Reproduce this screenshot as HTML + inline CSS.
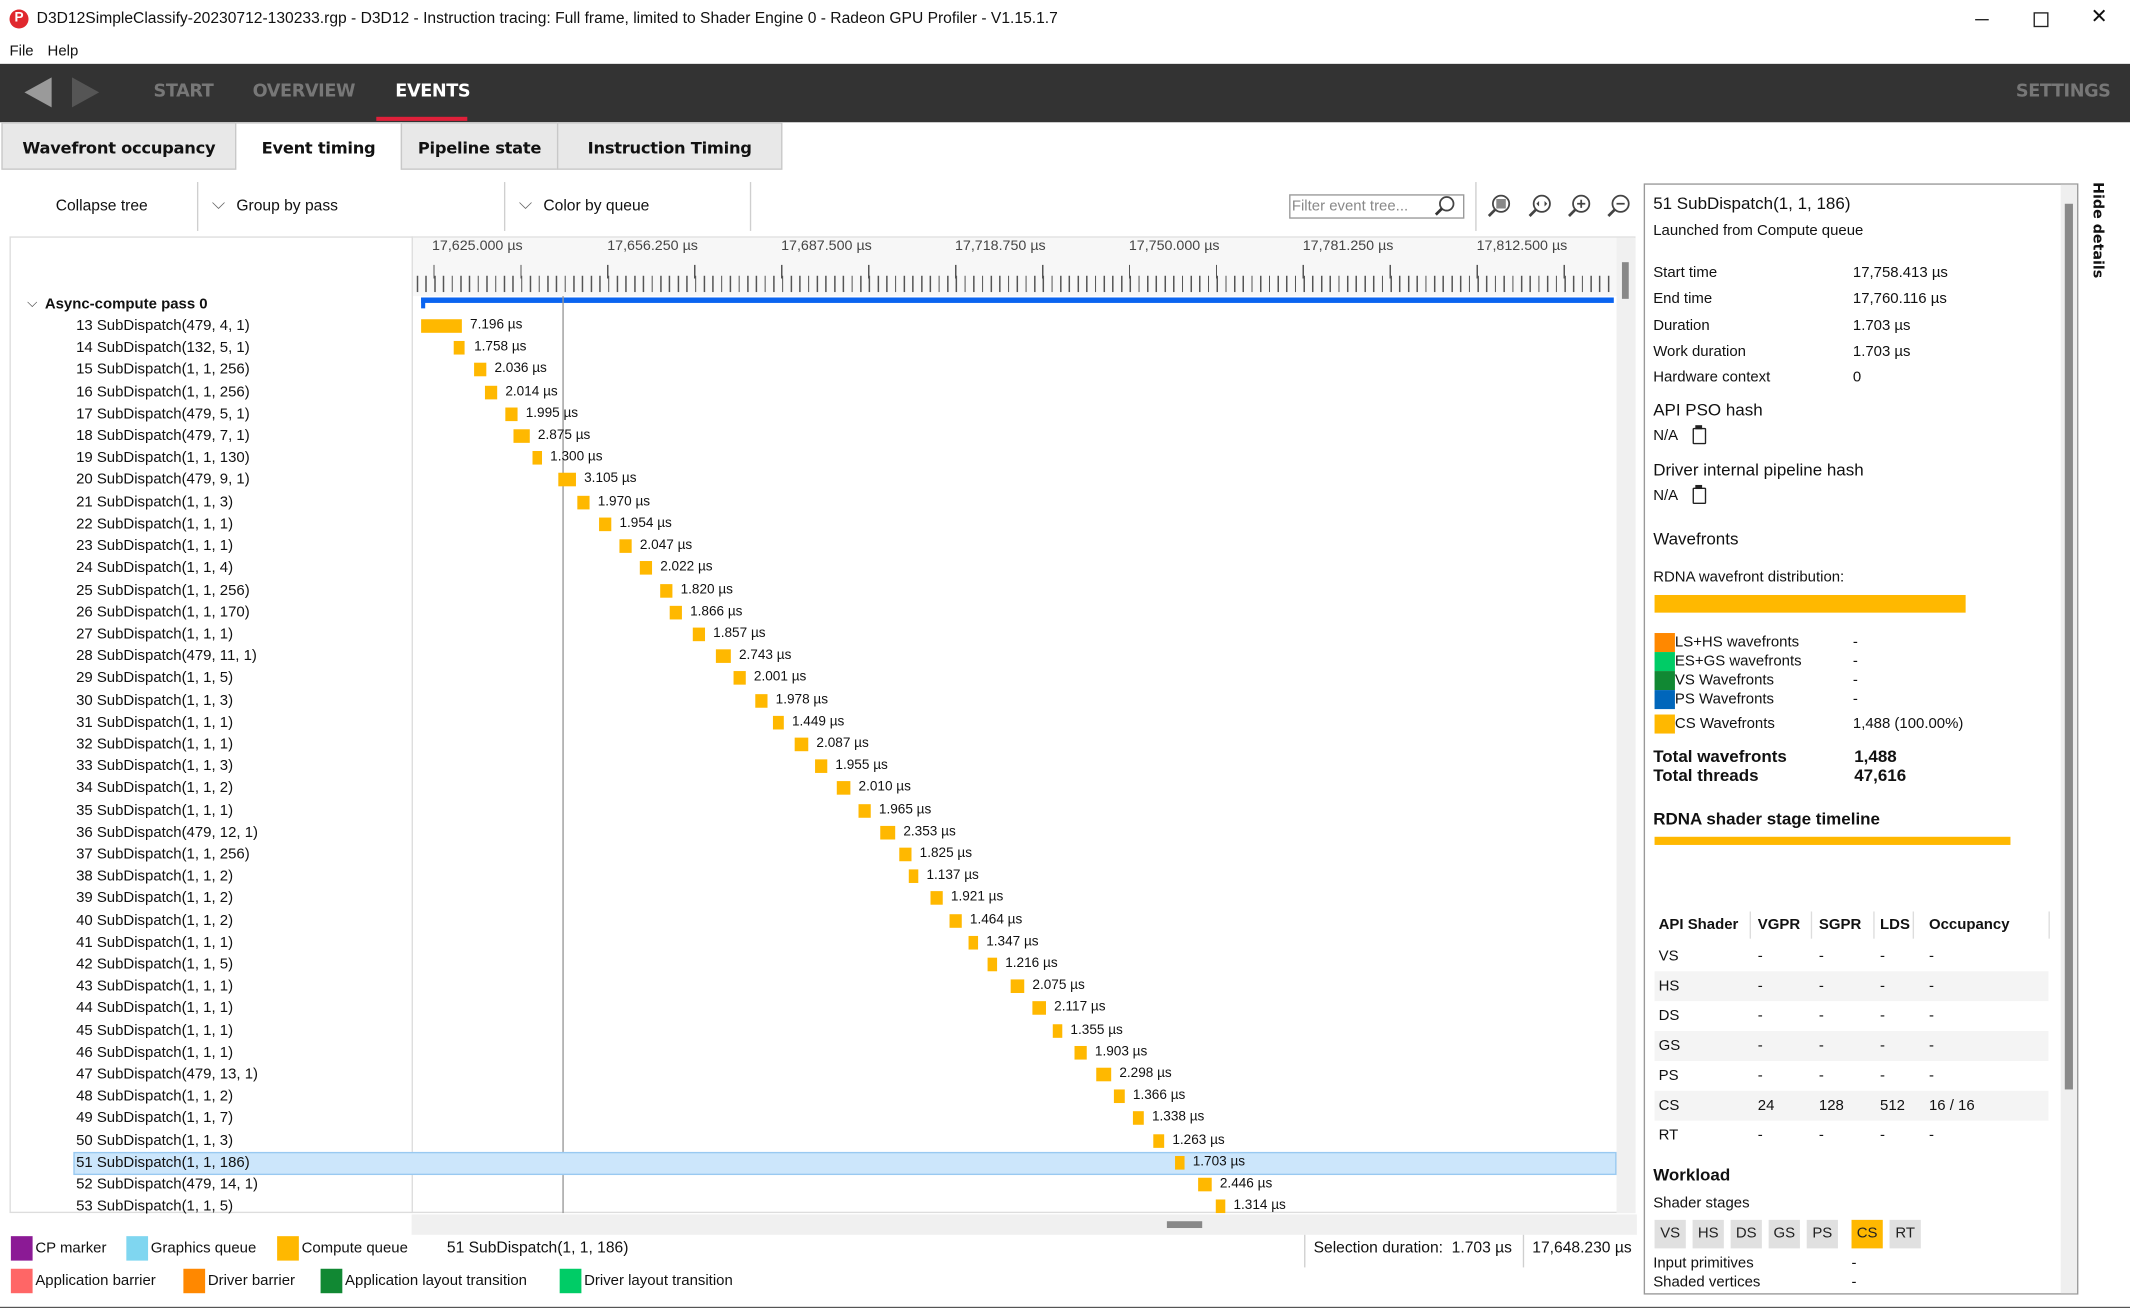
<!DOCTYPE html>
<html><head><meta charset="utf-8">
<style>
html,body{margin:0;padding:0;width:2130px;height:1308px;overflow:hidden;background:#fff}
#w{position:absolute;left:0;top:0;width:1568px;height:963px;transform:scale(1.35842);transform-origin:0 0;font-family:"Liberation Sans","DejaVu Sans",sans-serif;font-size:11px;color:#111;background:#fff}
.a{position:absolute;white-space:nowrap}
.t{position:absolute;white-space:nowrap;line-height:16px}
.b{font-weight:bold}
.bar{position:absolute;height:10px;background:#ffb800}
.sw{position:absolute;width:16px;height:18px}
.tab{position:absolute;top:90px;height:35px;line-height:36px;text-align:center;font-family:"DejaVu Sans",sans-serif;font-weight:bold;font-size:12px;letter-spacing:-0.2px;background:#e8e8e8;border:1px solid #c8c8c8;box-sizing:border-box}
.sep{position:absolute;width:1px;background:#cfcfcf}
.sb{position:absolute;top:898px;width:23px;height:21px;background:#e0e0e0;text-align:center;line-height:21px;font-size:11px;color:#222}
.nav{font-family:'DejaVu Sans',sans-serif;font-size:13px;letter-spacing:-0.3px}
</style></head><body><div id="w">
<div class="a" style="left:7px;top:7px;width:14px;height:14px;border-radius:50%;background:#e0282e;color:#fff;font-size:10px;font-weight:bold;text-align:center;line-height:14px">P</div>
<div class="t" style="left:27px;top:6px;font-size:11.5px">D3D12SimpleClassify-20230712-130233.rgp - D3D12 - Instruction tracing: Full frame, limited to Shader Engine 0 - Radeon GPU Profiler - V1.15.1.7</div>
<div class="a" style="left:1454px;top:14px;width:10px;height:1px;background:#222"></div>
<div class="a" style="left:1497px;top:9px;width:9px;height:9px;border:1px solid #222"></div>
<div class="t" style="left:1539px;top:5px;font-size:15px">✕</div>
<div class="t" style="left:7px;top:30px">File</div>
<div class="t" style="left:35px;top:30px">Help</div>
<div class="a" style="left:0;top:47px;width:1568px;height:43px;background:#333"></div>
<div class="a" style="left:18px;top:57px;width:0;height:0;border-top:11px solid transparent;border-bottom:11px solid transparent;border-right:20px solid #9a9a9a"></div>
<div class="a" style="left:53px;top:57px;width:0;height:0;border-top:11px solid transparent;border-bottom:11px solid transparent;border-left:20px solid #555"></div>
<div class="t b nav" style="left:113px;top:60px;color:#777">START</div>
<div class="t b nav" style="left:186px;top:60px;color:#777">OVERVIEW</div>
<div class="t b nav" style="left:291px;top:60px;color:#fff">EVENTS</div>
<div class="a" style="left:277px;top:86px;width:67px;height:3px;background:#e0203a"></div>
<div class="t b nav" style="left:1484px;top:60px;color:#777">SETTINGS</div>
<div class="tab" style="left:1px;width:173px">Wavefront occupancy</div>
<div class="tab" style="left:173px;width:123px;background:#fff;border-bottom:none">Event timing</div>
<div class="tab" style="left:295px;width:116px">Pipeline state</div>
<div class="tab" style="left:410px;width:166px">Instruction Timing</div>
<div class="t" style="left:41px;top:144px;font-size:11.5px">Collapse tree</div>
<div class="sep" style="left:145px;top:134px;height:36px"></div>
<div class="t" style="left:156px;top:142px;font-size:13px;color:#666">⌵</div>
<div class="t" style="left:174px;top:144px;font-size:11.5px">Group by pass</div>
<div class="sep" style="left:371px;top:134px;height:36px"></div>
<div class="t" style="left:382px;top:142px;font-size:13px;color:#666">⌵</div>
<div class="t" style="left:400px;top:144px;font-size:11.5px">Color by queue</div>
<div class="sep" style="left:552px;top:134px;height:36px"></div>
<div class="a" style="left:949px;top:143px;width:126px;height:16px;border:1px solid #999;font-size:11px;color:#888;line-height:16px;padding-left:1px">Filter event tree...</div>
<svg class="a" style="left:1054px;top:143px" width="18" height="18" viewBox="0 0 18 18"><circle cx="11" cy="7" r="5" fill="none" stroke="#444" stroke-width="1.3"/><line x1="7.5" y1="10.5" x2="3" y2="15" stroke="#333" stroke-width="2"/></svg>
<div class="sep" style="left:1086px;top:134px;height:36px"></div>
<svg class="a" style="left:1094px;top:142px" width="112" height="20" viewBox="0 0 112 20">
<g stroke="#444" fill="none" stroke-width="1.3"><circle cx="11" cy="8" r="6"/><line x1="7" y1="12" x2="2" y2="17" stroke-width="2"/></g><rect x="7.5" y="4.5" width="7" height="7" fill="#888"/>
<g stroke="#444" fill="none" stroke-width="1.3"><circle cx="41" cy="8" r="6"/><line x1="37" y1="12" x2="32" y2="17" stroke-width="2"/></g><path d="M37 8l2-2v4zM45 8l-2-2v4z" fill="#444"/>
<g stroke="#444" fill="none" stroke-width="1.3"><circle cx="70" cy="8" r="6"/><line x1="66" y1="12" x2="61" y2="17" stroke-width="2"/><line x1="67" y1="8" x2="73" y2="8"/><line x1="70" y1="5" x2="70" y2="11"/></g>
<g stroke="#444" fill="none" stroke-width="1.3"><circle cx="99" cy="8" r="6"/><line x1="95" y1="12" x2="90" y2="17" stroke-width="2"/><line x1="96" y1="8" x2="102" y2="8"/></g>
</svg>
<div class="a" style="left:7px;top:174px;width:1197px;height:719px;border:1px solid #ddd;box-sizing:border-box"></div>
<div class="sep" style="left:303px;top:174px;height:719px;background:#ddd"></div>
<div class="a" style="left:304px;top:175px;width:886px;height:43px;background:#f7f7f7"></div>
<div class="a" style="left:1190px;top:175px;width:14px;height:718px;background:#f0f0f0"></div>
<div class="a" style="left:1194px;top:193px;width:5px;height:27px;background:#888"></div>
<div class="t" style="left:318px;top:173px;font-size:10.5px;color:#444">17,625.000 µs</div>
<div class="t" style="left:447px;top:173px;font-size:10.5px;color:#444">17,656.250 µs</div>
<div class="t" style="left:575px;top:173px;font-size:10.5px;color:#444">17,687.500 µs</div>
<div class="t" style="left:703px;top:173px;font-size:10.5px;color:#444">17,718.750 µs</div>
<div class="t" style="left:831px;top:173px;font-size:10.5px;color:#444">17,750.000 µs</div>
<div class="t" style="left:959px;top:173px;font-size:10.5px;color:#444">17,781.250 µs</div>
<div class="t" style="left:1087px;top:173px;font-size:10.5px;color:#444">17,812.500 µs</div>
<div class="a" style="left:306px;top:203px;width:882px;height:12px;background:repeating-linear-gradient(90deg,#555 0,#555 1px,transparent 1px,transparent 6.4px);background-position:0.8px 0"></div>
<div class="a" style="left:319px;top:195px;width:870px;height:10px;background:repeating-linear-gradient(90deg,#555 0,#555 1px,transparent 1px,transparent 64px)"></div>
<div class="a" style="left:310px;top:219px;width:878px;height:4px;background:#0a64f0"></div>
<div class="a" style="left:310px;top:219px;width:3px;height:8px;background:#0a64f0"></div>
<div class="a" style="left:414px;top:218px;width:1px;height:675px;background:#999"></div>
<div class="a" style="left:54px;top:848px;width:1134px;height:15px;background:#cce6fb;border:1px solid #99c9f1"></div>
<div class="t" style="left:20px;top:216px;font-size:10px;color:#444">⌵</div>
<div class="t b" style="left:33px;top:216px">Async-compute pass 0</div>
<div class="a" style="left:303px;top:894px;width:902px;height:15px;background:#f0f0f0"></div>
<div class="a" style="left:859px;top:899px;width:26px;height:5px;background:#888"></div>
<div class="sw" style="left:8px;top:910px;background:#8b1a95"></div><div class="t" style="left:26px;top:911px">CP marker</div>
<div class="sw" style="left:93px;top:910px;background:#7fd6f0"></div><div class="t" style="left:111px;top:911px">Graphics queue</div>
<div class="sw" style="left:204px;top:910px;background:#ffb800"></div><div class="t" style="left:222px;top:911px">Compute queue</div>
<div class="t" style="left:329px;top:911px;font-size:11.5px">51 SubDispatch(1, 1, 186)</div>
<div class="sep" style="left:960px;top:909px;height:24px"></div>
<div class="t" style="left:967px;top:911px;font-size:11.5px">Selection duration:&nbsp; 1.703 µs</div>
<div class="sep" style="left:1121px;top:909px;height:24px"></div>
<div class="t" style="left:1128px;top:911px;font-size:11.5px">17,648.230 µs</div>
<div class="sw" style="left:8px;top:934px;background:#ff6666"></div><div class="t" style="left:26px;top:935px">Application barrier</div>
<div class="sw" style="left:135px;top:934px;background:#ff8800"></div><div class="t" style="left:153px;top:935px">Driver barrier</div>
<div class="sw" style="left:236px;top:934px;background:#118833"></div><div class="t" style="left:254px;top:935px">Application layout transition</div>
<div class="sw" style="left:412px;top:934px;background:#00cc66"></div><div class="t" style="left:430px;top:935px">Driver layout transition</div>
<div class="a" style="left:1210px;top:135px;width:320px;height:818px;border:1px solid #999;box-sizing:border-box"></div>
<div class="a" style="left:1517px;top:136px;width:12px;height:816px;background:#efefef"></div>
<div class="a" style="left:1520px;top:150px;width:6px;height:652px;background:#8a8a8a"></div>
<div class="a b" style="left:1536px;top:134px;width:16px;height:70px;"><div style="transform:rotate(90deg);transform-origin:0 0;position:absolute;left:14px;top:0;font-family:'DejaVu Sans',sans-serif;font-size:10.5px;white-space:nowrap">Hide details</div></div>
<div class="t" style="left:1217px;top:142px;font-size:12.5px">51 SubDispatch(1, 1, 186)</div>
<div class="t" style="left:1217px;top:162px">Launched from Compute queue</div>
<div class="t" style="left:1217px;top:193px">Start time</div><div class="t" style="left:1364px;top:193px">17,758.413 µs</div>
<div class="t" style="left:1217px;top:212px">End time</div><div class="t" style="left:1364px;top:212px">17,760.116 µs</div>
<div class="t" style="left:1217px;top:232px">Duration</div><div class="t" style="left:1364px;top:232px">1.703 µs</div>
<div class="t" style="left:1217px;top:251px">Work duration</div><div class="t" style="left:1364px;top:251px">1.703 µs</div>
<div class="t" style="left:1217px;top:270px">Hardware context</div><div class="t" style="left:1364px;top:270px">0</div>
<div class="t" style="left:1217px;top:294px;font-size:12.5px">API PSO hash</div>
<div class="t" style="left:1217px;top:313px">N/A</div>
<div class="a" style="left:1246px;top:315px;width:8px;height:10px;border:1.5px solid #222;border-radius:1px"></div><div class="a" style="left:1248px;top:313px;width:5px;height:3px;background:#222"></div>
<div class="t" style="left:1217px;top:338px;font-size:12.5px">Driver internal pipeline hash</div>
<div class="t" style="left:1217px;top:357px">N/A</div>
<div class="a" style="left:1246px;top:359px;width:8px;height:10px;border:1.5px solid #222;border-radius:1px"></div><div class="a" style="left:1248px;top:357px;width:5px;height:3px;background:#222"></div>
<div class="t" style="left:1217px;top:389px;font-size:12.5px">Wavefronts</div>
<div class="t" style="left:1217px;top:417px">RDNA wavefront distribution:</div>
<div class="a" style="left:1218px;top:438px;width:229px;height:13px;background:#ffb800"></div>
<div class="a" style="left:1218px;top:466px;width:15px;height:14px;background:#ff8800"></div><div class="t" style="left:1233px;top:465px">LS+HS wavefronts</div><div class="t" style="left:1364px;top:465px">-</div>
<div class="a" style="left:1218px;top:480px;width:15px;height:14px;background:#00cc66"></div><div class="t" style="left:1233px;top:479px">ES+GS wavefronts</div><div class="t" style="left:1364px;top:479px">-</div>
<div class="a" style="left:1218px;top:494px;width:15px;height:14px;background:#118833"></div><div class="t" style="left:1233px;top:493px">VS Wavefronts</div><div class="t" style="left:1364px;top:493px">-</div>
<div class="a" style="left:1218px;top:508px;width:15px;height:14px;background:#0066bb"></div><div class="t" style="left:1233px;top:507px">PS Wavefronts</div><div class="t" style="left:1364px;top:507px">-</div>
<div class="a" style="left:1218px;top:526px;width:15px;height:14px;background:#ffb800"></div><div class="t" style="left:1233px;top:525px">CS Wavefronts</div><div class="t" style="left:1364px;top:525px">1,488 (100.00%)</div>
<div class="t b" style="left:1217px;top:549px;font-size:12.5px">Total wavefronts</div><div class="t b" style="left:1365px;top:549px;font-size:12.5px">1,488</div>
<div class="t b" style="left:1217px;top:563px;font-size:12.5px">Total threads</div><div class="t b" style="left:1365px;top:563px;font-size:12.5px">47,616</div>
<div class="t b" style="left:1217px;top:595px;font-size:12.5px">RDNA shader stage timeline</div>
<div class="a" style="left:1218px;top:616px;width:262px;height:6px;background:#ffb800"></div>
<div class="a" style="left:1218px;top:715px;width:290px;height:22px;background:#f4f4f4"></div>
<div class="a" style="left:1218px;top:759px;width:290px;height:22px;background:#f4f4f4"></div>
<div class="a" style="left:1218px;top:803px;width:290px;height:22px;background:#f4f4f4"></div>
<div class="sep" style="left:1288px;top:671px;height:20px;background:#ddd"></div>
<div class="sep" style="left:1333px;top:671px;height:20px;background:#ddd"></div>
<div class="sep" style="left:1379px;top:671px;height:20px;background:#ddd"></div>
<div class="sep" style="left:1408px;top:671px;height:20px;background:#ddd"></div>
<div class="sep" style="left:1508px;top:671px;height:20px;background:#ddd"></div>
<div class="t b" style="left:1221px;top:673px">API Shader</div><div class="t b" style="left:1294px;top:673px">VGPR</div><div class="t b" style="left:1339px;top:673px">SGPR</div><div class="t b" style="left:1384px;top:673px">LDS</div><div class="t b" style="left:1420px;top:673px">Occupancy</div>
<div class="t b" style="left:1217px;top:857px;font-size:12.5px">Workload</div>
<div class="t" style="left:1217px;top:878px">Shader stages</div>
<div class="sb" style="left:1218px">VS</div><div class="sb" style="left:1246px">HS</div><div class="sb" style="left:1274px">DS</div><div class="sb" style="left:1302px">GS</div><div class="sb" style="left:1330px">PS</div><div class="sb" style="left:1363px;background:#ffb800">CS</div><div class="sb" style="left:1391px">RT</div>
<div class="t" style="left:1217px;top:922px">Input primitives</div><div class="t" style="left:1363px;top:922px">-</div>
<div class="t" style="left:1217px;top:936px">Shaded vertices</div><div class="t" style="left:1363px;top:936px">-</div>
<div class="a" style="left:0;top:962px;width:1568px;height:1px;background:#555"></div>

<div class="t" style="left:56px;top:232px">13 SubDispatch(479, 4, 1)</div><div class="bar" style="left:310px;top:235px;width:30px"></div><div class="t" style="left:346px;top:232px;font-size:10px">7.196 µs</div>
<div class="t" style="left:56px;top:248px">14 SubDispatch(132, 5, 1)</div><div class="bar" style="left:334px;top:251px;width:8px"></div><div class="t" style="left:349px;top:248px;font-size:10px">1.758 µs</div>
<div class="t" style="left:56px;top:264px">15 SubDispatch(1, 1, 256)</div><div class="bar" style="left:349px;top:267px;width:9px"></div><div class="t" style="left:364px;top:264px;font-size:10px">2.036 µs</div>
<div class="t" style="left:56px;top:281px">16 SubDispatch(1, 1, 256)</div><div class="bar" style="left:357px;top:284px;width:9px"></div><div class="t" style="left:372px;top:281px;font-size:10px">2.014 µs</div>
<div class="t" style="left:56px;top:297px">17 SubDispatch(479, 5, 1)</div><div class="bar" style="left:372px;top:300px;width:9px"></div><div class="t" style="left:387px;top:297px;font-size:10px">1.995 µs</div>
<div class="t" style="left:56px;top:313px">18 SubDispatch(479, 7, 1)</div><div class="bar" style="left:378px;top:316px;width:12px"></div><div class="t" style="left:396px;top:313px;font-size:10px">2.875 µs</div>
<div class="t" style="left:56px;top:329px">19 SubDispatch(1, 1, 130)</div><div class="bar" style="left:392px;top:332px;width:7px"></div><div class="t" style="left:405px;top:329px;font-size:10px">1.300 µs</div>
<div class="t" style="left:56px;top:345px">20 SubDispatch(479, 9, 1)</div><div class="bar" style="left:411px;top:348px;width:13px"></div><div class="t" style="left:430px;top:345px;font-size:10px">3.105 µs</div>
<div class="t" style="left:56px;top:362px">21 SubDispatch(1, 1, 3)</div><div class="bar" style="left:425px;top:365px;width:9px"></div><div class="t" style="left:440px;top:362px;font-size:10px">1.970 µs</div>
<div class="t" style="left:56px;top:378px">22 SubDispatch(1, 1, 1)</div><div class="bar" style="left:441px;top:381px;width:9px"></div><div class="t" style="left:456px;top:378px;font-size:10px">1.954 µs</div>
<div class="t" style="left:56px;top:394px">23 SubDispatch(1, 1, 1)</div><div class="bar" style="left:456px;top:397px;width:9px"></div><div class="t" style="left:471px;top:394px;font-size:10px">2.047 µs</div>
<div class="t" style="left:56px;top:410px">24 SubDispatch(1, 1, 4)</div><div class="bar" style="left:471px;top:413px;width:9px"></div><div class="t" style="left:486px;top:410px;font-size:10px">2.022 µs</div>
<div class="t" style="left:56px;top:427px">25 SubDispatch(1, 1, 256)</div><div class="bar" style="left:486px;top:430px;width:9px"></div><div class="t" style="left:501px;top:427px;font-size:10px">1.820 µs</div>
<div class="t" style="left:56px;top:443px">26 SubDispatch(1, 1, 170)</div><div class="bar" style="left:493px;top:446px;width:9px"></div><div class="t" style="left:508px;top:443px;font-size:10px">1.866 µs</div>
<div class="t" style="left:56px;top:459px">27 SubDispatch(1, 1, 1)</div><div class="bar" style="left:510px;top:462px;width:9px"></div><div class="t" style="left:525px;top:459px;font-size:10px">1.857 µs</div>
<div class="t" style="left:56px;top:475px">28 SubDispatch(479, 11, 1)</div><div class="bar" style="left:527px;top:478px;width:11px"></div><div class="t" style="left:544px;top:475px;font-size:10px">2.743 µs</div>
<div class="t" style="left:56px;top:491px">29 SubDispatch(1, 1, 5)</div><div class="bar" style="left:540px;top:494px;width:9px"></div><div class="t" style="left:555px;top:491px;font-size:10px">2.001 µs</div>
<div class="t" style="left:56px;top:508px">30 SubDispatch(1, 1, 3)</div><div class="bar" style="left:556px;top:511px;width:9px"></div><div class="t" style="left:571px;top:508px;font-size:10px">1.978 µs</div>
<div class="t" style="left:56px;top:524px">31 SubDispatch(1, 1, 1)</div><div class="bar" style="left:569px;top:527px;width:8px"></div><div class="t" style="left:583px;top:524px;font-size:10px">1.449 µs</div>
<div class="t" style="left:56px;top:540px">32 SubDispatch(1, 1, 1)</div><div class="bar" style="left:585px;top:543px;width:10px"></div><div class="t" style="left:601px;top:540px;font-size:10px">2.087 µs</div>
<div class="t" style="left:56px;top:556px">33 SubDispatch(1, 1, 3)</div><div class="bar" style="left:600px;top:559px;width:9px"></div><div class="t" style="left:615px;top:556px;font-size:10px">1.955 µs</div>
<div class="t" style="left:56px;top:572px">34 SubDispatch(1, 1, 2)</div><div class="bar" style="left:616px;top:575px;width:10px"></div><div class="t" style="left:632px;top:572px;font-size:10px">2.010 µs</div>
<div class="t" style="left:56px;top:589px">35 SubDispatch(1, 1, 1)</div><div class="bar" style="left:632px;top:592px;width:9px"></div><div class="t" style="left:647px;top:589px;font-size:10px">1.965 µs</div>
<div class="t" style="left:56px;top:605px">36 SubDispatch(479, 12, 1)</div><div class="bar" style="left:648px;top:608px;width:11px"></div><div class="t" style="left:665px;top:605px;font-size:10px">2.353 µs</div>
<div class="t" style="left:56px;top:621px">37 SubDispatch(1, 1, 256)</div><div class="bar" style="left:662px;top:624px;width:9px"></div><div class="t" style="left:677px;top:621px;font-size:10px">1.825 µs</div>
<div class="t" style="left:56px;top:637px">38 SubDispatch(1, 1, 2)</div><div class="bar" style="left:669px;top:640px;width:7px"></div><div class="t" style="left:682px;top:637px;font-size:10px">1.137 µs</div>
<div class="t" style="left:56px;top:653px">39 SubDispatch(1, 1, 2)</div><div class="bar" style="left:685px;top:656px;width:9px"></div><div class="t" style="left:700px;top:653px;font-size:10px">1.921 µs</div>
<div class="t" style="left:56px;top:670px">40 SubDispatch(1, 1, 2)</div><div class="bar" style="left:699px;top:673px;width:9px"></div><div class="t" style="left:714px;top:670px;font-size:10px">1.464 µs</div>
<div class="t" style="left:56px;top:686px">41 SubDispatch(1, 1, 1)</div><div class="bar" style="left:713px;top:689px;width:7px"></div><div class="t" style="left:726px;top:686px;font-size:10px">1.347 µs</div>
<div class="t" style="left:56px;top:702px">42 SubDispatch(1, 1, 5)</div><div class="bar" style="left:727px;top:705px;width:7px"></div><div class="t" style="left:740px;top:702px;font-size:10px">1.216 µs</div>
<div class="t" style="left:56px;top:718px">43 SubDispatch(1, 1, 1)</div><div class="bar" style="left:744px;top:721px;width:10px"></div><div class="t" style="left:760px;top:718px;font-size:10px">2.075 µs</div>
<div class="t" style="left:56px;top:734px">44 SubDispatch(1, 1, 1)</div><div class="bar" style="left:760px;top:737px;width:10px"></div><div class="t" style="left:776px;top:734px;font-size:10px">2.117 µs</div>
<div class="t" style="left:56px;top:751px">45 SubDispatch(1, 1, 1)</div><div class="bar" style="left:775px;top:754px;width:7px"></div><div class="t" style="left:788px;top:751px;font-size:10px">1.355 µs</div>
<div class="t" style="left:56px;top:767px">46 SubDispatch(1, 1, 1)</div><div class="bar" style="left:791px;top:770px;width:9px"></div><div class="t" style="left:806px;top:767px;font-size:10px">1.903 µs</div>
<div class="t" style="left:56px;top:783px">47 SubDispatch(479, 13, 1)</div><div class="bar" style="left:807px;top:786px;width:11px"></div><div class="t" style="left:824px;top:783px;font-size:10px">2.298 µs</div>
<div class="t" style="left:56px;top:799px">48 SubDispatch(1, 1, 2)</div><div class="bar" style="left:820px;top:802px;width:8px"></div><div class="t" style="left:834px;top:799px;font-size:10px">1.366 µs</div>
<div class="t" style="left:56px;top:815px">49 SubDispatch(1, 1, 7)</div><div class="bar" style="left:834px;top:818px;width:8px"></div><div class="t" style="left:848px;top:815px;font-size:10px">1.338 µs</div>
<div class="t" style="left:56px;top:832px">50 SubDispatch(1, 1, 3)</div><div class="bar" style="left:849px;top:835px;width:8px"></div><div class="t" style="left:863px;top:832px;font-size:10px">1.263 µs</div>
<div class="t" style="left:56px;top:848px">51 SubDispatch(1, 1, 186)</div><div class="bar" style="left:865px;top:851px;width:7px"></div><div class="t" style="left:878px;top:848px;font-size:10px">1.703 µs</div>
<div class="t" style="left:56px;top:864px">52 SubDispatch(479, 14, 1)</div><div class="bar" style="left:882px;top:867px;width:10px"></div><div class="t" style="left:898px;top:864px;font-size:10px">2.446 µs</div>
<div class="t" style="left:56px;top:880px">53 SubDispatch(1, 1, 5)</div><div class="bar" style="left:895px;top:883px;width:7px"></div><div class="t" style="left:908px;top:880px;font-size:10px">1.314 µs</div>

<div class="t" style="left:1221px;top:696px">VS</div><div class="t" style="left:1294px;top:696px">-</div><div class="t" style="left:1339px;top:696px">-</div><div class="t" style="left:1384px;top:696px">-</div><div class="t" style="left:1420px;top:696px">-</div>
<div class="t" style="left:1221px;top:718px">HS</div><div class="t" style="left:1294px;top:718px">-</div><div class="t" style="left:1339px;top:718px">-</div><div class="t" style="left:1384px;top:718px">-</div><div class="t" style="left:1420px;top:718px">-</div>
<div class="t" style="left:1221px;top:740px">DS</div><div class="t" style="left:1294px;top:740px">-</div><div class="t" style="left:1339px;top:740px">-</div><div class="t" style="left:1384px;top:740px">-</div><div class="t" style="left:1420px;top:740px">-</div>
<div class="t" style="left:1221px;top:762px">GS</div><div class="t" style="left:1294px;top:762px">-</div><div class="t" style="left:1339px;top:762px">-</div><div class="t" style="left:1384px;top:762px">-</div><div class="t" style="left:1420px;top:762px">-</div>
<div class="t" style="left:1221px;top:784px">PS</div><div class="t" style="left:1294px;top:784px">-</div><div class="t" style="left:1339px;top:784px">-</div><div class="t" style="left:1384px;top:784px">-</div><div class="t" style="left:1420px;top:784px">-</div>
<div class="t" style="left:1221px;top:806px">CS</div><div class="t" style="left:1294px;top:806px">24</div><div class="t" style="left:1339px;top:806px">128</div><div class="t" style="left:1384px;top:806px">512</div><div class="t" style="left:1420px;top:806px">16 / 16</div>
<div class="t" style="left:1221px;top:828px">RT</div><div class="t" style="left:1294px;top:828px">-</div><div class="t" style="left:1339px;top:828px">-</div><div class="t" style="left:1384px;top:828px">-</div><div class="t" style="left:1420px;top:828px">-</div>
</div></body></html>
